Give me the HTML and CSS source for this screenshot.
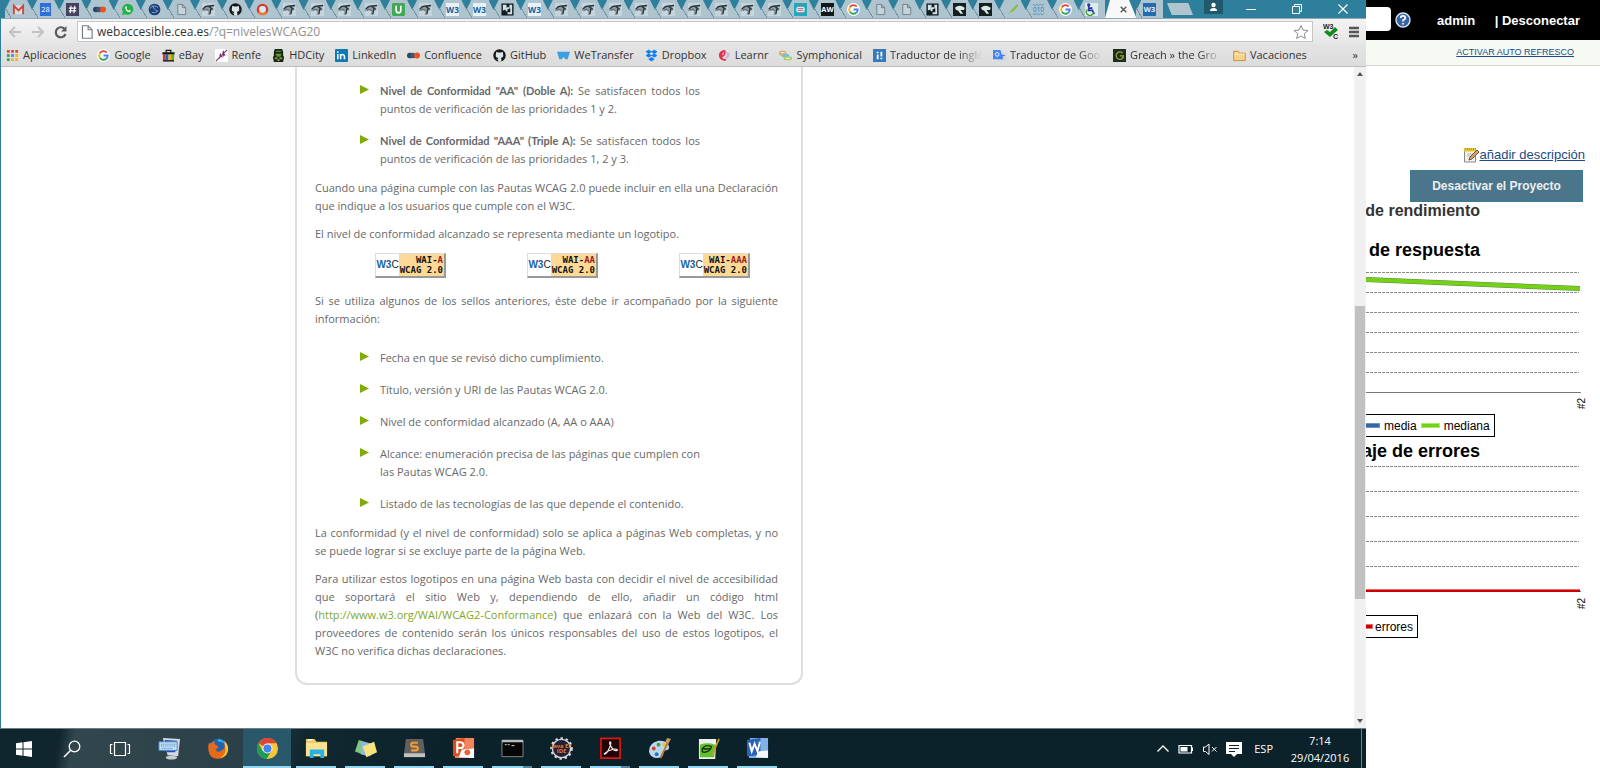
FILE: index.html
```html
<!DOCTYPE html>
<html lang="es">
<head>
<meta charset="utf-8">
<title>Niveles WCAG 2.0</title>
<link rel="stylesheet" href="styles.css">
</head>
<body>
<svg class="defs" width="0" height="0" aria-hidden="true">
  <defs>
    <symbol id="gmail" viewBox="0 0 14 14"><path d="M1 2.500h12v9.500H1z" fill="#d6dfe3"/><path d="M2 12V3l5 5 5-5v9" fill="none" stroke="#cf4338" stroke-width="2"/></symbol>
    <symbol id="cal" viewBox="0 0 14 14"><path d="M1 0h12v14H1z" fill="#2f6fd6"/><text x="7" y="10" font-size="8" fill="#fff" text-anchor="middle">28</text></symbol>
    <symbol id="hash" viewBox="0 0 14 14"><rect width="14" height="14" fill="#42425e"/><path d="M5.500 3l-1 8M9.500 3l-1 8M3 5.500h8M3 8.500h8" stroke="#fff" stroke-width="1.200"/></symbol>
    <symbol id="confl" viewBox="0 0 14 14"><rect x="0" y="4" width="7" height="6" rx="3" fill="#26466b"/><circle cx="6.500" cy="7" r="3" fill="#3d5877"/><circle cx="10.800" cy="7" r="3.200" fill="#e8541e"/></symbol>
    <symbol id="whats" viewBox="0 0 14 14"><path d="M1 13l1-3.500A6 6 0 1 1 4.500 12z" fill="#25b24a"/><path d="M4.500 4l1.300-.5.8 1.800-.7.800q1 1.500 2.300 2.200l.8-.8 1.700.9q-.6 1.800-2.300 1.500Q4.500 8.500 4.500 4z" fill="#fff"/></symbol>
    <symbol id="globe" viewBox="0 0 14 14"><circle cx="7" cy="7" r="6.300" fill="#1c3f78"/><path d="M2 6q4-5 9-1M4 10q4 2 7-2M5 3q1 4 5 6" stroke="#8ba9d2" fill="none"/></symbol>
    <symbol id="page" viewBox="0 0 14 14"><path d="M3 1.500h5l3.500 3.500v7.500H3zM8 1.500V5h3.500" fill="#f6f8f9" fill-opacity=".3" stroke="#737d82"/></symbol>
    <symbol id="bird" viewBox="0 0 14 14"><rect width="14" height="14" fill="#c6d5db"/><path d="M0 7Q2 3 6 2.500L13.500 2 12.500 4.500 9 5.500 11.500 8 9.500 9 8.500 13 6 13 7 9 4 7.500 0 9z" fill="#8d9ba1"/><path d="M1 6.500Q4 2.500 7 3.500L13 2.500M7 3.500L12 7M9.500 6L8.500 12" stroke="#26343a" stroke-width="1.400" fill="none"/><path d="M2 8q3-2 5 0" stroke="#4d5d63" fill="none"/></symbol>
    <symbol id="github" viewBox="0 0 14 14"><circle cx="7" cy="7" r="6.700" fill="#171717"/><path d="M3.500 3l2 .7h3l2-.7.3 2Q12 9 8.500 9.500l.5 1.200v3H5.500v-2L3 10.500l2.300.2.3-1.200Q2 9 3.200 5z" fill="#dce5e9"/></symbol>
    <symbol id="ring" viewBox="0 0 14 14"><circle cx="7" cy="7" r="5" fill="#dce9ed" stroke="#d8382e" stroke-width="2.500"/><path d="M11 10a5 5 0 0 1-8 0" fill="none" stroke="#ec7b2c" stroke-width="2.500"/></symbol>
    <symbol id="udem" viewBox="0 0 14 14"><rect width="14" height="14" rx="1.500" fill="#43a854"/><path d="M4.500 3v5q0 2.500 2.500 2.500T9.500 8V3" fill="none" stroke="#fff" stroke-width="1.800"/></symbol>
    <symbol id="w3" viewBox="0 0 14 14"><rect width="14" height="14" fill="#e8f1f6"/><text x="7" y="11" font-size="9" font-weight="bold" fill="#165e9b" text-anchor="middle">W3</text></symbol>
    <symbol id="w3b" viewBox="0 0 14 14"><rect width="14" height="14" fill="#246aae"/><text x="7" y="10" font-size="8" font-weight="bold" fill="#e4eef7" text-anchor="middle">W3</text></symbol>
    <symbol id="puzzle" viewBox="0 0 14 14"><rect x=".5" y=".5" width="13" height="13" fill="#111d22"/><path d="M2 2h4v3l2-1 1 2-2 1v2H5V7L2 8zM9 2h3v10H7v-2h3V6H9z" fill="#d4e1e5"/></symbol>
    <symbol id="teal" viewBox="0 0 14 14"><rect width="14" height="14" fill="#1faabd"/><rect x="2.500" y="4" width="9" height="6" rx="2" fill="#d7edf3"/><path d="M4 6h6M4 8h6M5 11h4M5 3h4" stroke="#d4587a"/></symbol>
    <symbol id="aw" viewBox="0 0 14 14"><rect width="14" height="14" fill="#101719"/><text x="7" y="10" font-size="8" font-weight="bold" fill="#fff" text-anchor="middle">AW</text></symbol>
    <symbol id="google" viewBox="0 0 14 14"><circle cx="7" cy="7" r="7" fill="#fff"/><path d="M10.500 3.800A4.600 4.600 0 0 0 3 4.700" fill="none" stroke="#e94235" stroke-width="2"/><path d="M3 4.700a4.600 4.600 0 0 0 0 4.600" fill="none" stroke="#fabb05" stroke-width="2"/><path d="M3 9.300a4.600 4.600 0 0 0 7 1.200" fill="none" stroke="#34a853" stroke-width="2"/><path d="M10 10.500q1.600-1.300 1.600-3.500H7" fill="none" stroke="#4285f4" stroke-width="2"/></symbol>
    <symbol id="head" viewBox="0 0 14 14"><rect width="14" height="14" fill="#13201f"/><path d="M2 5Q7 1 12.500 5L12 7.500 8 7.500 11 11.500H8L5.500 8Q3 8 2 5z" fill="#dce9e9"/></symbol>
    <symbol id="pen" viewBox="0 0 14 14"><path d="M2 13Q5 7 12 1l1 2Q9 9 5 10z" fill="#82bd44"/></symbol>
    <symbol id="bin" viewBox="0 0 14 14"><path d="M1 1l2 2 2-2 2 2 2-2 2 2 2-2M1 11l2 2 2-2 2 2 2-2 2 2 2-2" stroke="#4c91c7" fill="none"/><text x="7" y="9.500" font-size="7" fill="#2b79b8" text-anchor="middle">010</text></symbol>
    <symbol id="wheel" viewBox="0 0 14 14"><rect width="14" height="14" fill="#dfe9ee"/><circle cx="4" cy="2" r="1.800" fill="#2439a8"/><path d="M4 3v5h4l2 4M4 5.500h4M4 8" stroke="#2439a8" stroke-width="1.800" fill="none"/><path d="M2.500 7a3.800 3.800 0 1 0 6.500 3" stroke="#4ba62b" stroke-width="1.600" fill="none"/></symbol>
    <symbol id="apps" viewBox="0 0 14 14"><path d="M1 1h3v3H1zM5.500 1h3v3h-3zM10 1h3v3h-3z" fill="#e54436"/><path d="M1 5.500h3v3H1z" fill="#37a653"/><path d="M5.500 5.500h3v3h-3z" fill="#4688f1"/><path d="M10 5.500h3v3h-3zM5.500 10h3v3h-3zM10 10h3v3h-3z" fill="#f2b51d"/><path d="M1 10h3v3H1z" fill="#37a653"/></symbol>
    <symbol id="ebay" viewBox="0 0 14 14"><path d="M4.500 4V1.500h5V4" fill="none" stroke="#111" stroke-width="1.300"/><path d="M.5 3.500h13V6H.5z" fill="#111"/><path d="M1 6h3v6H1z" fill="#e32c38"/><path d="M4 6h3v6H4z" fill="#1668d0"/><path d="M7 6h3v6H7z" fill="#f2b600"/><path d="M10 6h3v6h-3z" fill="#6ba517"/><path d="M1 12h12v1.500H1z" fill="#111"/></symbol>
    <symbol id="renfe" viewBox="0 0 14 14"><rect width="14" height="14" fill="#fff"/><path d="M1 13L6 8 13 1M5 6l3 3M8 4l3 3M6 5l-1 5M9 2l0 6" stroke="#7b2c66" stroke-width="1.200" fill="none"/></symbol>
    <symbol id="hd" viewBox="0 0 14 14"><path d="M3 0h8l1 3v4l1 2-1 5H2L1 9l1-2V3z" fill="#152414"/><path d="M4 2h6v1H4zM4 5h6v2H4zM3 9h3v2H3zM8 9h3v2H8z" fill="#5da23b"/><path d="M5 7h4v1H5zM6 11h2v2H6z" fill="#d09b46"/></symbol>
    <symbol id="linkedin" viewBox="0 0 14 14"><rect width="14" height="14" rx="1" fill="#0d79b5"/><path d="M3 5.500V11M6 5.500V11M6 8q0-2 2-2t2.200 2v3" fill="none" stroke="#fff" stroke-width="1.700"/><circle cx="3" cy="3.300" r="1" fill="#fff"/></symbol>
    <symbol id="wet" viewBox="0 0 14 14"><path d="M0 3h14l-2.500 8L9 11 7 8.500 5 11H2.500z" fill="#3c9fe0"/></symbol>
    <symbol id="dropbox" viewBox="0 0 14 14"><path d="M4 1L7 3 4 5 1 3zM10 1l3 2-3 2-3-2zM4 5l3 2-3 2-3-2zM10 5l3 2-3 2-3-2zM7 9l3 2-3 2-3-2z" fill="#0c7de8" stroke="#0c7de8" stroke-width=".6"/></symbol>
    <symbol id="learnr" viewBox="0 0 14 14"><path d="M8 1Q2 1 1 6q-.5 6 7 7l1-2Q5 11 4.500 9 9 7 8 1z" fill="#df3448"/><path d="M6 3q-2 2-1 4 2-1 1-4z" fill="#e5dfe0"/><path d="M9 3q5 1 3 5-1 3-5 2 3-2 2-7z" fill="#d5b2e6"/></symbol>
    <symbol id="symph" viewBox="0 0 14 14"><rect y="2" width="8" height="5" rx="2" fill="#e0ad65"/><rect x="3" y="5" width="8" height="4" rx="2" fill="#79bed9"/><rect x="5" y="8" width="9" height="4" rx="2" fill="#a7cd61"/><path d="M2 4h4M7 10h5" stroke="#fff"/></symbol>
    <symbol id="it" viewBox="0 0 14 14"><rect width="14" height="14" fill="#3679bc"/><path d="M5 3v1.500M5 6v5M9 3v5M9 9.500v1.500" stroke="#fff" stroke-width="1.900"/></symbol>
    <symbol id="trans" viewBox="0 0 14 14"><rect x="5" y="4" width="9" height="9" fill="#cfd8e5"/><path d="M0 1h8l3 10H0z" fill="#4285f4"/><circle cx="4.500" cy="5.800" r="2" fill="none" stroke="#fff"/><path d="M8 7h5M10.500 6v2l-2 3" stroke="#577caf" fill="none"/></symbol>
    <symbol id="greach" viewBox="0 0 14 14"><rect width="14" height="14" fill="#212a20"/><path d="M10.500 4.500A4 4 0 1 0 11 9V7.500H7.500" fill="none" stroke="#9aab37" stroke-width="1.300"/></symbol>
    <symbol id="folder" viewBox="0 0 14 14"><path d="M.7 12.500V2.500h5l1.500 2h6v8z" fill="#f8d385" stroke="#c58c3a"/><path d="M1.500 5.500h11" stroke="#fff1c9"/></symbol>
  </defs>
</svg>
<div class="screen">
  <div class="desktop">
    <div class="browser">
      <header class="tabstrip">
        <div class="tabs">
          <button class="tab" aria-label="Gmail"><svg><use href="#gmail"/></svg></button>
          <button class="tab" aria-label="Calendario"><svg><use href="#cal"/></svg></button>
          <button class="tab" aria-label="Slack"><svg><use href="#hash"/></svg></button>
          <button class="tab" aria-label="Confluence"><svg><use href="#confl"/></svg></button>
          <button class="tab" aria-label="WhatsApp"><svg><use href="#whats"/></svg></button>
          <button class="tab" aria-label="Web"><svg><use href="#globe"/></svg></button>
          <button class="tab" aria-label="Página"><svg><use href="#page"/></svg></button>
          <button class="tab" aria-label="Proyecto"><svg><use href="#bird"/></svg></button>
          <button class="tab" aria-label="GitHub"><svg><use href="#github"/></svg></button>
          <button class="tab" aria-label="Web"><svg><use href="#ring"/></svg></button>
          <button class="tab" aria-label="Proyecto"><svg><use href="#bird"/></svg></button>
          <button class="tab" aria-label="Proyecto"><svg><use href="#bird"/></svg></button>
          <button class="tab" aria-label="Proyecto"><svg><use href="#bird"/></svg></button>
          <button class="tab" aria-label="Proyecto"><svg><use href="#bird"/></svg></button>
          <button class="tab" aria-label="Udemy"><svg><use href="#udem"/></svg></button>
          <button class="tab" aria-label="Proyecto"><svg><use href="#bird"/></svg></button>
          <button class="tab" aria-label="W3C"><svg><use href="#w3"/></svg></button>
          <button class="tab" aria-label="W3C"><svg><use href="#w3"/></svg></button>
          <button class="tab" aria-label="Web"><svg><use href="#puzzle"/></svg></button>
          <button class="tab" aria-label="W3C"><svg><use href="#w3"/></svg></button>
          <button class="tab" aria-label="Proyecto"><svg><use href="#bird"/></svg></button>
          <button class="tab" aria-label="Proyecto"><svg><use href="#bird"/></svg></button>
          <button class="tab" aria-label="Proyecto"><svg><use href="#bird"/></svg></button>
          <button class="tab" aria-label="Proyecto"><svg><use href="#bird"/></svg></button>
          <button class="tab" aria-label="Proyecto"><svg><use href="#bird"/></svg></button>
          <button class="tab" aria-label="Proyecto"><svg><use href="#bird"/></svg></button>
          <button class="tab" aria-label="Proyecto"><svg><use href="#bird"/></svg></button>
          <button class="tab" aria-label="Proyecto"><svg><use href="#bird"/></svg></button>
          <button class="tab" aria-label="Proyecto"><svg><use href="#bird"/></svg></button>
          <button class="tab" aria-label="Web"><svg><use href="#teal"/></svg></button>
          <button class="tab" aria-label="AW"><svg><use href="#aw"/></svg></button>
          <button class="tab" aria-label="Google"><svg><use href="#google"/></svg></button>
          <button class="tab" aria-label="Página"><svg><use href="#page"/></svg></button>
          <button class="tab" aria-label="Página"><svg><use href="#page"/></svg></button>
          <button class="tab" aria-label="Web"><svg><use href="#puzzle"/></svg></button>
          <button class="tab" aria-label="Web"><svg><use href="#head"/></svg></button>
          <button class="tab" aria-label="Web"><svg><use href="#head"/></svg></button>
          <button class="tab" aria-label="Web"><svg><use href="#pen"/></svg></button>
          <button class="tab" aria-label="Web"><svg><use href="#bin"/></svg></button>
          <button class="tab" aria-label="Google"><svg><use href="#google"/></svg></button>
          <button class="tab" aria-label="Accesibilidad"><svg><use href="#wheel"/></svg></button>
          <button class="tab active" aria-label="Cerrar pestaña"><svg viewBox="0 0 14 14"><path d="M4 4l6 6M10 4l-6 6" stroke="#5c5c5c" stroke-width="1.600"/></svg></button>
          <button class="tab" aria-label="W3C"><svg><use href="#w3b"/></svg></button>
        </div>
        <button class="newtab" aria-label="Nueva pestaña"></button>
        <div class="winctl">
          <button class="user" aria-label="Usuario"><svg width="9" height="10" viewBox="0 0 9 10"><circle cx="4.500" cy="3" r="2.200" fill="#fff"/><path d="M1 9q0-3 3.500-3T8 9z" fill="#fff"/></svg></button>
          <button aria-label="Minimizar"><svg width="12" height="12" viewBox="0 0 12 12"><path d="M1 6.500h10" stroke="#fff"/></svg></button>
          <button aria-label="Restaurar"><svg width="12" height="12" viewBox="0 0 12 12"><path d="M1.500 3.500h7v7h-7zM3.500 3.500v-2h7v7h-2" fill="none" stroke="#fff"/></svg></button>
          <button aria-label="Cerrar"><svg width="12" height="12" viewBox="0 0 12 12"><path d="M1.500 1.500l9 9M10.500 1.500l-9 9" stroke="#fff" stroke-width="1.200"/></svg></button>
        </div>
      </header>
      <div class="toolbar">
        <button aria-label="Atrás"><svg width="14" height="14" viewBox="0 0 14 14"><path d="M13 7H3M7 2L2 7l5 5" fill="none" stroke="#c2c2c2" stroke-width="2"/></svg></button>
        <button aria-label="Adelante"><svg width="14" height="14" viewBox="0 0 14 14"><path d="M1 7h10M7 2l5 5-5 5" fill="none" stroke="#c2c2c2" stroke-width="2"/></svg></button>
        <button aria-label="Recargar"><svg width="14" height="14" viewBox="0 0 14 14"><path d="M11 4.500A5 5 0 1 0 11.500 9" fill="none" stroke="#5a5a5a" stroke-width="2.200"/><path d="M12.500 1v5.500H7z" fill="#5a5a5a"/></svg></button>
        <div class="omnibox">
          <svg width="16" height="16"><use href="#page"/></svg>
          <div class="url" role="textbox" aria-label="Dirección" contenteditable="true">webaccesible.cea.es<span>/?q=nivelesWCAG20</span></div>
          <svg width="16" height="16" viewBox="0 0 16 16"><path d="M8 1.500l2 4.600 5 .4-3.800 3.200 1.200 4.800L8 12l-4.400 2.500 1.200-4.800L1 6.500l5-.4z" fill="none" stroke="#8b8b8b"/></svg>
        </div>
        <button class="ext" aria-label="W3C"><svg width="17" height="17" viewBox="0 0 17 17"><text x="1" y="6" font-size="7" font-weight="bold" fill="#222">W3</text><path d="M2 9l3-2 3 2 5-5 3 3-8 7z" fill="#128a1c"/><text x="11" y="16" font-size="7" font-weight="bold" fill="#222">C</text></svg></button>
        <button aria-label="Menú"><svg width="12" height="12" viewBox="0 0 12 12"><path d="M1 2h10M1 6h10M1 10h10" stroke="#555" stroke-width="2.400"/></svg></button>
      </div>
      <nav class="bookmarks">
        <a href="#"><svg><use href="#apps"/></svg><span>Aplicaciones</span></a>
        <a href="#"><svg><use href="#google"/></svg><span>Google</span></a>
        <a href="#"><svg><use href="#ebay"/></svg><span>eBay</span></a>
        <a href="#"><svg><use href="#renfe"/></svg><span>Renfe</span></a>
        <a href="#"><svg><use href="#hd"/></svg><span>HDCity</span></a>
        <a href="#"><svg><use href="#linkedin"/></svg><span>LinkedIn</span></a>
        <a href="#"><svg><use href="#confl"/></svg><span>Confluence</span></a>
        <a href="#"><svg><use href="#github"/></svg><span>GitHub</span></a>
        <a href="#"><svg><use href="#wet"/></svg><span>WeTransfer</span></a>
        <a href="#"><svg><use href="#dropbox"/></svg><span>Dropbox</span></a>
        <a href="#"><svg><use href="#learnr"/></svg><span>Learnr</span></a>
        <a href="#"><svg><use href="#symph"/></svg><span>Symphonical</span></a>
        <a href="#"><svg><use href="#it"/></svg><span class="fade">Traductor de inglé</span></a>
        <a href="#"><svg><use href="#trans"/></svg><span class="fade">Traductor de Goo</span></a>
        <a href="#"><svg><use href="#greach"/></svg><span class="fade">Greach » the Gro</span></a>
        <a href="#"><svg><use href="#folder"/></svg><span>Vacaciones</span></a>
        <button class="more" aria-label="Más marcadores">»</button>
      </nav>
      <div class="viewport">
        <main class="page">
          <article class="card">
            <ul>
              <li><strong>Nivel de Conformidad "AA" (Doble A):</strong> Se satisfacen todos los puntos de verificación de las prioridades 1 y 2.</li>
              <li><strong>Nivel de Conformidad "AAA" (Triple A):</strong> Se satisfacen todos los puntos de verificación de las prioridades 1, 2 y 3.</li>
            </ul>
            <p>Cuando una página cumple con las Pautas WCAG 2.0 puede incluir en ella una Declaración que indique a los usuarios que cumple con el W3C.</p>
            <p>El nivel de conformidad alcanzado se representa mediante un logotipo.</p>
            <div class="badges">
              <div class="badge"><b class="w3c">W3<i>C</i></b><span>WAI-<em>A</em><br>WCAG 2.0</span></div>
              <div class="badge"><b class="w3c">W3<i>C</i></b><span>WAI-<em>AA</em><br>WCAG 2.0</span></div>
              <div class="badge"><b class="w3c">W3<i>C</i></b><span>WAI-<em>AAA</em><br>WCAG 2.0</span></div>
            </div>
            <p>Si se utiliza algunos de los sellos anteriores, éste debe ir acompañado por la siguiente información:</p>
            <ul class="spaced">
              <li>Fecha en que se revisó dicho cumplimiento.</li>
              <li>Título, versión y URI de las Pautas WCAG 2.0.</li>
              <li>Nivel de conformidad alcanzado (A, AA o AAA)</li>
              <li>Alcance: enumeración precisa de las páginas que cumplen con las Pautas WCAG 2.0.</li>
              <li>Listado de las tecnologías de las que depende el contenido.</li>
            </ul>
            <p>La conformidad (y el nivel de conformidad) solo se aplica a páginas Web completas, y no se puede lograr si se excluye parte de la página Web.</p>
            <p>Para utilizar estos logotipos en una página Web basta con decidir el nivel de accesibilidad que soportará el sitio Web y, dependiendo de ello, añadir un código html (<a href="#">http://www.w3.org/WAI/WCAG2-Conformance</a>) que enlazará con la Web del W3C. Los proveedores de contenido serán los únicos responsables del uso de estos logotipos, el W3C no verifica dichas declaraciones.</p>
          </article>
        </main>
        <div class="scrollbar">
          <i class="arrow up"></i><i class="track-a"></i><i class="thumb"></i><i class="track-b"></i><i class="arrow down"></i>
        </div>
      </div>
    </div>
    <footer class="taskbar">
      <button class="sys" aria-label="Inicio"><svg viewBox="0 0 24 24"><path d="M4 6.300l6.500-1v6.200H4zM11.500 5.200L20 4v7.500h-8.500zM4 12.500h6.500v6.200L4 17.800zM11.500 12.500H20V20l-8.500-1.200z" fill="#fff"/></svg></button>
      <button class="sys" aria-label="Buscar"><svg viewBox="0 0 24 24"><circle cx="14.500" cy="9.500" r="5.300" fill="none" stroke="#fff" stroke-width="1.300"/><path d="M10.700 13.300L4 20" stroke="#fff" stroke-width="1.500"/></svg></button>
      <button class="sys" aria-label="Vista de tareas"><svg viewBox="0 0 24 24"><path d="M6.500 5.500h11v13h-11zM4.500 7.500h-2v9h2M19.500 7.500h2v9h-2" fill="none" stroke="#fff" stroke-width="1.200"/></svg></button>
      <div class="apps">
        <button class="app" aria-label="Teclado"><svg viewBox="0 0 24 24"><path d="M5 1l18 1-2 18-11-1z" fill="#d6d9e2"/><path d="M7 3l13 1-2 12-9 0z" fill="#2947b5"/><path d="M1 5h19v9H1z" fill="#c3e0f5" stroke="#4b86bd"/><path d="M3 7.500h15M3 9.500h15M4 12h12" stroke="#3682bd" stroke-dasharray="1 1"/><ellipse cx="14" cy="21.500" rx="6" ry="2" fill="#c8cbd0"/></svg></button>
        <button class="app" aria-label="Firefox"><svg viewBox="0 0 24 24"><circle cx="12" cy="12" r="10.500" fill="#2263ae"/><path d="M12 2q7 1 8 8-1-4-6-5-4 0-2-3z" fill="#35b4e6"/><path d="M2 6l2 1Q6 4 8 5q-1 3 3 4l1 2-3 2q2 4 6 1 5-2 3-8 3 2 3.500 5Q22 20 14 22.500 3 24 1.500 14 1 9 2 6z" fill="#e96a16"/><path d="M18 4q6 6 3 13-2 4-7 5 7-5 5-11z" fill="#ffc635"/></svg></button>
        <button class="app current" aria-label="Chrome"><svg viewBox="0 0 24 24"><circle cx="12" cy="12" r="11" fill="#fac637"/><path d="M12 12L2.500 6.500A11 11 0 0 1 21.500 6.500H12z" fill="#de4439"/><path d="M2.500 6.500A11 11 0 0 0 11 23l5.500-9L7 14.500z" fill="#1e9b55"/><circle cx="12" cy="12" r="5.300" fill="#f4f4f4"/><circle cx="12" cy="12" r="4.200" fill="#4285f4"/></svg></button>
        <button class="app open" aria-label="Explorador"><svg viewBox="0 0 24 24"><path d="M1 2h9l2 3h11v15H1z" fill="#ecc75e"/><path d="M1 6h22v14H1z" fill="#fbe290"/><path d="M5 22v-9h15v9h-4v-4H9v4z" fill="#27b1e8"/><path d="M3 3h5" stroke="#fff" stroke-width="1.500"/></svg></button>
        <button class="app open" aria-label="Notas"><svg viewBox="0 0 24 24"><path d="M5 3l13 4-4 13L1 15z" fill="#82c57e"/><path d="M8 5l11 2-2 13L7 18z" fill="#8db9e9"/><path d="M9 10l12-5 3 11-11 5z" fill="#f7e37b"/></svg></button>
        <button class="app open" aria-label="Sublime Text"><svg viewBox="0 0 24 24"><path d="M3 2h18l2 16q-11 2-22 0z" fill="#606060"/><path d="M1 17h22v4H1z" fill="#c2c2c2"/><path d="M15.500 6h-5q-2 0-2 2t2 2h3q2 0 2 2t-2 2h-5" fill="none" stroke="#f99b2b" stroke-width="2.200"/></svg></button>
        <button class="app open" aria-label="PowerPoint"><svg viewBox="0 0 24 24"><path d="M4 1h19v21H3z" fill="#f2845a"/><path d="M1 3l12-2v18L1 20z" fill="#dc4b1d"/><path d="M10 13l13-1v10l-16-1z" fill="#fff"/><path d="M5.500 17V5.500h3q3.500 0 3.500 3t-3.500 3h-3" fill="none" stroke="#fff" stroke-width="2.200"/><circle cx="16" cy="16" r="3" fill="#e3643a"/></svg></button>
        <button class="app open multi" aria-label="Símbolo del sistema"><svg viewBox="0 0 24 24"><path d="M1 3.500h22v17H1z" fill="#060606" stroke="#888"/><path d="M1 3h22v2.500H1z" fill="#b9bdc0"/><path d="M4 8h2M7 8h2M11 9h3" stroke="#ddd"/></svg></button>
        <button class="app open" aria-label="Java EE IDE"><svg viewBox="0 0 24 24"><circle cx="12" cy="12" r="9.500" fill="#20203a" stroke="#d7d7d7" stroke-width="1.500"/><circle cx="12" cy="12" r="10.800" fill="none" stroke="#ddd" stroke-width="2" stroke-dasharray="2.500 3"/><text x="12" y="11" font-size="6" font-weight="bold" fill="#e18324" text-anchor="middle">Java EE</text><text x="12" y="17" font-size="6" font-weight="bold" fill="#e18324" text-anchor="middle">IDE</text></svg></button>
        <button class="app open multi" aria-label="Acrobat"><svg viewBox="0 0 24 24"><path d="M2 1.500h20v20.500H2z" fill="#240507" stroke="#d71915" stroke-width="1.800"/><path d="M12 5q-2 0 0 4 3 6 7 5 1-2-5-1-5 1-8 4-1 1 0 1 2 0 5-7 2-5 1-6z" fill="none" stroke="#f7e9e9" stroke-width="1.200"/></svg></button>
        <button class="app open" aria-label="Paint"><svg viewBox="0 0 24 24"><path d="M1 15Q1 6 11 4q10-1 11 7 0 3-5 3-3 1-1 4-1 4-7 4-7-1-8-7z" fill="#b9daed"/><circle cx="6" cy="12" r="2" fill="#d63e2c"/><circle cx="11" cy="8" r="2" fill="#4b9b3c"/><circle cx="17" cy="8" r="2" fill="#f0bf29"/><circle cx="9" cy="18" r="2" fill="#236fc1"/><path d="M22 3l-9 19" stroke="#bf762d" stroke-width="2"/><path d="M20 1l4 1-3 5-3-2z" fill="#c79a63"/></svg></button>
        <button class="app open" aria-label="Notepad++"><svg viewBox="0 0 24 24"><path d="M2 2h18l-1 21H2z" fill="#eef2eb"/><path d="M3 8q8-3 16 0l-1 13H3z" fill="#63bf2d"/><path d="M5 13q4-6 10-3-1 5-7 6-4 0-2-4 4 1 9 0" fill="none" stroke="#173817" stroke-width="1.500"/><path d="M23 2l-6 14-1 3" stroke="#c69929" stroke-width="1.800" fill="none"/></svg></button>
        <button class="app open" aria-label="Word"><svg viewBox="0 0 24 24"><path d="M4 1h19v21H3z" fill="#7fb0e6"/><path d="M1 3l14-2v18L1 20z" fill="#2c61b8"/><path d="M13 15l10-1v8l-13-1z" fill="#f4f8fd"/><path d="M3.500 6l2.500 9 3-8 3 8 2.500-10" fill="none" stroke="#fff" stroke-width="2"/></svg></button>
      </div>
      <div class="tray">
        <svg width="14" height="16" viewBox="0 0 14 16"><path d="M1.500 10.500L7 5l5.500 5.500" fill="none" stroke="#fff" stroke-width="1.300"/></svg>
        <svg width="16" height="16" viewBox="0 0 16 16"><path d="M1 4.500h12.500v7.500H1z" fill="none" stroke="#fff" stroke-width="1.200"/><path d="M2.500 6h7v4.500h-7zM13.500 6.500H15v3.500h-1.500z" fill="#fff"/></svg>
        <svg width="16" height="16" viewBox="0 0 16 16"><path d="M1.500 6v4.500h2L7 13.500V3L3.500 6zM10 6l4.500 4.500M14.500 6L10 10.500" fill="none" stroke="#fff"/></svg>
        <svg width="16" height="16" viewBox="0 0 16 16"><path d="M0 1h16v12H11l-3 3-3-3H0z" fill="#fff"/><path d="M3 4.500h10M3 7.500h10M3 10.500h6" stroke="#10242c" stroke-width="1.200"/></svg>
        <span class="lang">ESP</span>
        <time class="clock">7:14<br>29/04/2016</time>
        <button class="showdesk" aria-label="Mostrar escritorio"></button>
      </div>
    </footer>
  </div>
  <aside class="jenkins">
    <div class="top">
      <input type="text" class="search" aria-label="Buscar">
      <svg width="16" height="16" viewBox="0 0 16 16"><circle cx="8" cy="8" r="7" fill="#3765a5" stroke="#d9e3f2" stroke-width="1.400"/><path d="M5.700 6q0-2.200 2.300-2.200T10.300 6Q10.300 7.200 8 8.300V9.600M8 11v1.600" fill="none" stroke="#fff" stroke-width="1.700"/></svg>
      <a href="#" class="admin">admin</a>
      <span class="logout">| <a href="#">Desconectar</a></span>
    </div>
    <div class="crumbs"><a href="#">ACTIVAR AUTO REFRESCO</a></div>
    <div class="desc">
      <svg width="16" height="16" viewBox="0 0 16 16"><path d="M1.500 3h11v12h-11z" fill="#f1f1ee" stroke="#888"/><path d="M1 1h12v3.500H1z" fill="#e7c33d"/><path d="M2 2h11" stroke="#8d7726" stroke-dasharray="1 1"/><path d="M4 7h6M4 9h4" stroke="#bbb"/><path d="M14 3l2 2-7 7-3 1 1-3z" fill="#dfa05b" stroke="#4a3a2a" stroke-width=".8"/></svg><a href="#">añadir descripción</a>
    </div>
    <button class="disable">Desactivar el Proyecto</button>
    <h2>de rendimiento</h2>
    <section class="chart">
      <h3>de respuesta</h3>
      <svg width="234" height="148" viewBox="0 0 234 148">
        <path d="M0 8.500h213M0 28.500h213M0 48.500h213M0 68.500h213M0 88.500h213M0 108.500h213" stroke="#8a8a8a" stroke-dasharray="3 1"/>
        <path d="M0 128.500h215" stroke="#777"/>
        <path d="M0 15.500L214 24.500" stroke="#67854a" stroke-width="5"/>
        <path d="M0 15.500L214 24.500" stroke="#73d216" stroke-width="4"/>
        <text transform="translate(219 145) rotate(-90)" font-size="10">#2</text>
      </svg>
      <div class="legend"><i class="media"></i><span>media</span><i class="mediana"></i><span>mediana</span></div>
    </section>
    <section class="chart">
      <h3>aje de errores</h3>
      <svg width="234" height="148" viewBox="0 0 234 148">
        <path d="M0 1.500h213M0 26.500h213M0 51.500h213M0 76.500h213M0 101.500h213" stroke="#8a8a8a" stroke-dasharray="3 1"/>
        <path d="M0 126.500h215" stroke="#777"/>
        <path d="M0 124.500h214" stroke="#ef6b6b"/>
        <path d="M0 126h214" stroke="#cc0000" stroke-width="2"/>
        <text transform="translate(219 144) rotate(-90)" font-size="10">#2</text>
      </svg>
      <div class="legend narrow"><i class="err"></i><span>errores</span></div>
    </section>
  </aside>
</div>
</body>
</html>
```
FILE: styles.css
```css
* { box-sizing: border-box; }
body { margin: 0; background: #fff; font-family: "Liberation Sans", Arial, sans-serif; color: #000; }
button { border: 0; padding: 0; margin: 0; background: none; font: inherit; color: inherit; }
svg { display: block; flex: none; }
.defs { position: absolute; }
.screen { display: grid; grid-template-columns: minmax(0, 1fr) 234px; min-height: 100vh; }
.desktop { display: flex; flex-direction: column; min-height: 100vh; font-family: "Open Sans", "Noto Sans", sans-serif; }
.browser { flex: 1; display: flex; flex-direction: column; border-left: 1px solid #2e7f9b; }

/* tabs */
.tabstrip { display: flex; height: 19px; background: #2e7f9b; border-bottom: 1px solid #8fa9b3; padding-left: 4px; }
.tabs { display: flex; flex: 0 0 1158px; }
.tab { position: relative; flex: 40 1 0; display: flex; align-items: center; justify-content: center; background: #aec5d0; }
.tab:nth-child(-n+22) { flex-grow: 41; }
.tab svg { width: 13px; height: 13px; }
.tab::before { content: ""; position: absolute; left: -5px; top: 0; width: 10px; height: 10px; background: #2e7f9b; clip-path: polygon(0 0, 100% 0, 50% 100%); }
.tab::after { content: ""; position: absolute; left: 0; top: 8px; width: 6px; height: 10px; background: linear-gradient(to top right, transparent 45%, #7998a6 46%, #7998a6 56%, transparent 57%); }
.tab.active { padding-left: 5px; background: #f8f8f8; clip-path: polygon(5px 0, 24px 0, 100% 100%, 0 100%); }
.newtab { width: 26px; height: 12px; margin: 3px 0 0 4px; background: #aec5d0; clip-path: polygon(0 0, 82% 0, 100% 100%, 18% 100%); }
.tab.active::before, .tab.active::after { display: none; }
.winctl { margin-left: auto; display: flex; align-items: center; flex: none; }
.winctl button { width: 46px; height: 18px; display: flex; align-items: center; justify-content: center; }
.winctl .user { width: 19px; height: 14px; margin: 0 5px 4px 0; background: #22586c; }

/* toolbar */
.toolbar { display: flex; align-items: center; gap: 9px; height: 25px; padding: 0 6px 0 7px; background: linear-gradient(#f3f3f3, #e6e6e6); }
.omnibox { flex: 1; display: flex; align-items: center; gap: 2px; height: 21px; padding: 0 3px 0 1px; background: #fff; border: 1px solid #c6c6c6; }
.url { flex: 1; font-size: 12px; line-height: 18px; color: #333; outline: 0; }
.url span { color: #8f8f8f; }
.ext text { font-family: "Liberation Sans", sans-serif; }

/* bookmarks */
.bookmarks { display: flex; align-items: center; gap: 11px; height: 23px; padding: 0 8px 0 5px; background: linear-gradient(#e4e4e4, #dcdcdc); border-bottom: 1px solid #bdbdbd; font-size: 11px; line-height: 18px; color: #333; white-space: nowrap; }
.bookmarks a { display: flex; align-items: center; gap: 4px; color: inherit; text-decoration: none; }
.bookmarks svg { width: 13px; height: 13px; }
.fade { width: 92px; overflow: hidden; -webkit-mask-image: linear-gradient(to right, #000 75%, transparent); mask-image: linear-gradient(to right, #000 75%, transparent); }
.more { margin-left: auto; }

/* page */
.viewport { flex: 1; display: flex; background: #fff; }
.page { flex: 1; padding: 0 12px 20px 294px; }
.card { max-width: 508px; padding: 15px 23px 13px 18px; border: 2px solid #dedede; border-top: 0; border-radius: 0 0 12px 12px; font-family: "Open Sans", "Noto Sans", sans-serif; font-size: 11px; line-height: 18px; color: #686868; text-align: justify; }
.card strong { font-family: Lato, "Open Sans", sans-serif; }
.card p { margin: 0 0 10px; }
.card a { color: #7fa82b; text-decoration: none; }
.card ul { list-style: none; margin: 0; padding: 0 78px 0 65px; }
.card li { position: relative; margin-bottom: 14px; }
.card li:last-child { margin-bottom: 11px; }
.card li::before { content: ""; position: absolute; left: -20px; top: 3px; width: 9px; height: 9px; background: #7fac04; clip-path: polygon(0 0, 100% 50%, 0 100%); }
.card .spaced { padding-top: 11px; }
.badges { display: flex; justify-content: space-between; padding: 0 28px 0 60px; margin-bottom: 14px; }
.badge { display: flex; width: 71px; height: 25px; background: #fdd997; border: 1px solid #ddd; border-right: 2px solid #999; border-bottom: 2px solid #999; font-family: "DejaVu Sans Mono", monospace; font-size: 9px; font-weight: bold; line-height: 10px; text-align: right; color: #111; }
.badge span { flex: 1; padding: 1px 1px 0 0; white-space: nowrap; }
.badge em { font-style: normal; color: #a02020; }
.w3c { width: 23px; background: #fff; font-family: "Liberation Sans", sans-serif; font-size: 10px; line-height: 22px; color: #1a62a8; text-align: center; }
.w3c i { font-style: normal; font-weight: normal; color: #222; }

.scrollbar { width: 12px; background: #f0f0f0; display: flex; flex-direction: column; align-items: center; }
.arrow { width: 6px; height: 4px; margin: 5px 0; background: #555; clip-path: polygon(50% 0, 100% 100%, 0 100%); }
.arrow.down { clip-path: polygon(0 0, 100% 0, 50% 100%); }
.track-a { flex: 225; }
.thumb { flex: 292; width: 10px; background: #c1c1c1; }
.track-b { flex: 115; }

/* taskbar */
.taskbar { display: flex; height: 40px; color: #fff; border-top: 1px solid #6b7f86; background: linear-gradient(100deg, #10262f 0, #10262f 60px, #32464d 75px, #2c4048 240px, #122831 300px, #0c222b 450px, #0c222b 100%); }
.sys { width: 48px; display: flex; align-items: center; justify-content: center; }
.sys svg { width: 24px; height: 24px; }
.apps { display: flex; gap: 1px; margin-left: 1px; }
.app { width: 48px; display: flex; align-items: center; justify-content: center; }
.app svg { width: 23px; height: 23px; }
.current { background: #28586a linear-gradient(#93d6ef, #93d6ef) bottom / 100% 2px no-repeat; }
.open { background: linear-gradient(#93d6ef, #93d6ef) bottom / 40px 2px no-repeat; }
.multi { background: linear-gradient(to right, #93d6ef 31px, #5c8799 31px) bottom / 40px 2px no-repeat; }
.tray { display: flex; align-items: center; margin-left: auto; gap: 8px; font-size: 11px; line-height: 17px; }
.lang { margin-left: 4px; }
.clock { width: 66px; margin-left: 6px; text-align: center; }
.showdesk { width: 5px; height: 40px; border-left: 1px solid #6b7f86; }

/* right-hand page */
.jenkins { overflow: hidden; display: flex; flex-direction: column; align-items: flex-end; font-size: 13px; background: #fff; }
.jenkins a { color: #204a87; }
.top { align-self: stretch; display: flex; align-items: center; height: 40px; padding-right: 20px; background: #000; color: #fff; font-weight: bold; }
.jenkins .top a { color: #fff; text-decoration: none; }
.search { width: 25px; height: 24px; margin: 0 4px 3px 0; border: 0; border-radius: 0 4px 4px 0; background: #fff; }
.admin { margin: 0 auto 0 26px; }
.crumbs { align-self: stretch; height: 26px; padding-right: 26px; background: #f6faf2; border-bottom: 1px solid #d3d7cf; font-size: 9px; line-height: 25px; text-align: right; }
.desc { display: flex; align-items: center; height: 18px; margin: 80px 15px 6px 0; line-height: 16px; }
.desc svg { height: 18px; }
.disable { width: 173px; height: 32px; margin-right: 17px; background: #4b758b; border: 1px solid #3b7b93; color: #eee; font-size: 12px; font-weight: bold; }
.jenkins h2, .jenkins h3 { margin: 0; white-space: nowrap; }
.jenkins h2 { padding-right: 120px; font-size: 16px; line-height: 18px; color: #333; margin-bottom: 18px; }
.chart { display: flex; flex-direction: column; align-items: flex-end; width: 234px; }
.jenkins h3 { padding: 0 120px 2px 0; font-size: 18px; line-height: 24px; }
.legend { align-self: flex-start; display: flex; align-items: center; gap: 4px; height: 23px; padding-right: 4px; margin: 2px 0; border: 1px solid #000; border-left: 0; font-size: 12px; }
.legend.narrow { gap: 2px; }
.legend i { width: 19px; height: 5px; border: 1px solid; }
.legend i.media { width: 14px; border-left: 0; background: #3465a4; border-color: #6d94c6; }
.legend i.mediana { background: #73d216; border-color: #a9e66c; }
.legend i.err { width: 7px; border-left: 0; background: #c00; border-color: #ef6b6b; }
```
